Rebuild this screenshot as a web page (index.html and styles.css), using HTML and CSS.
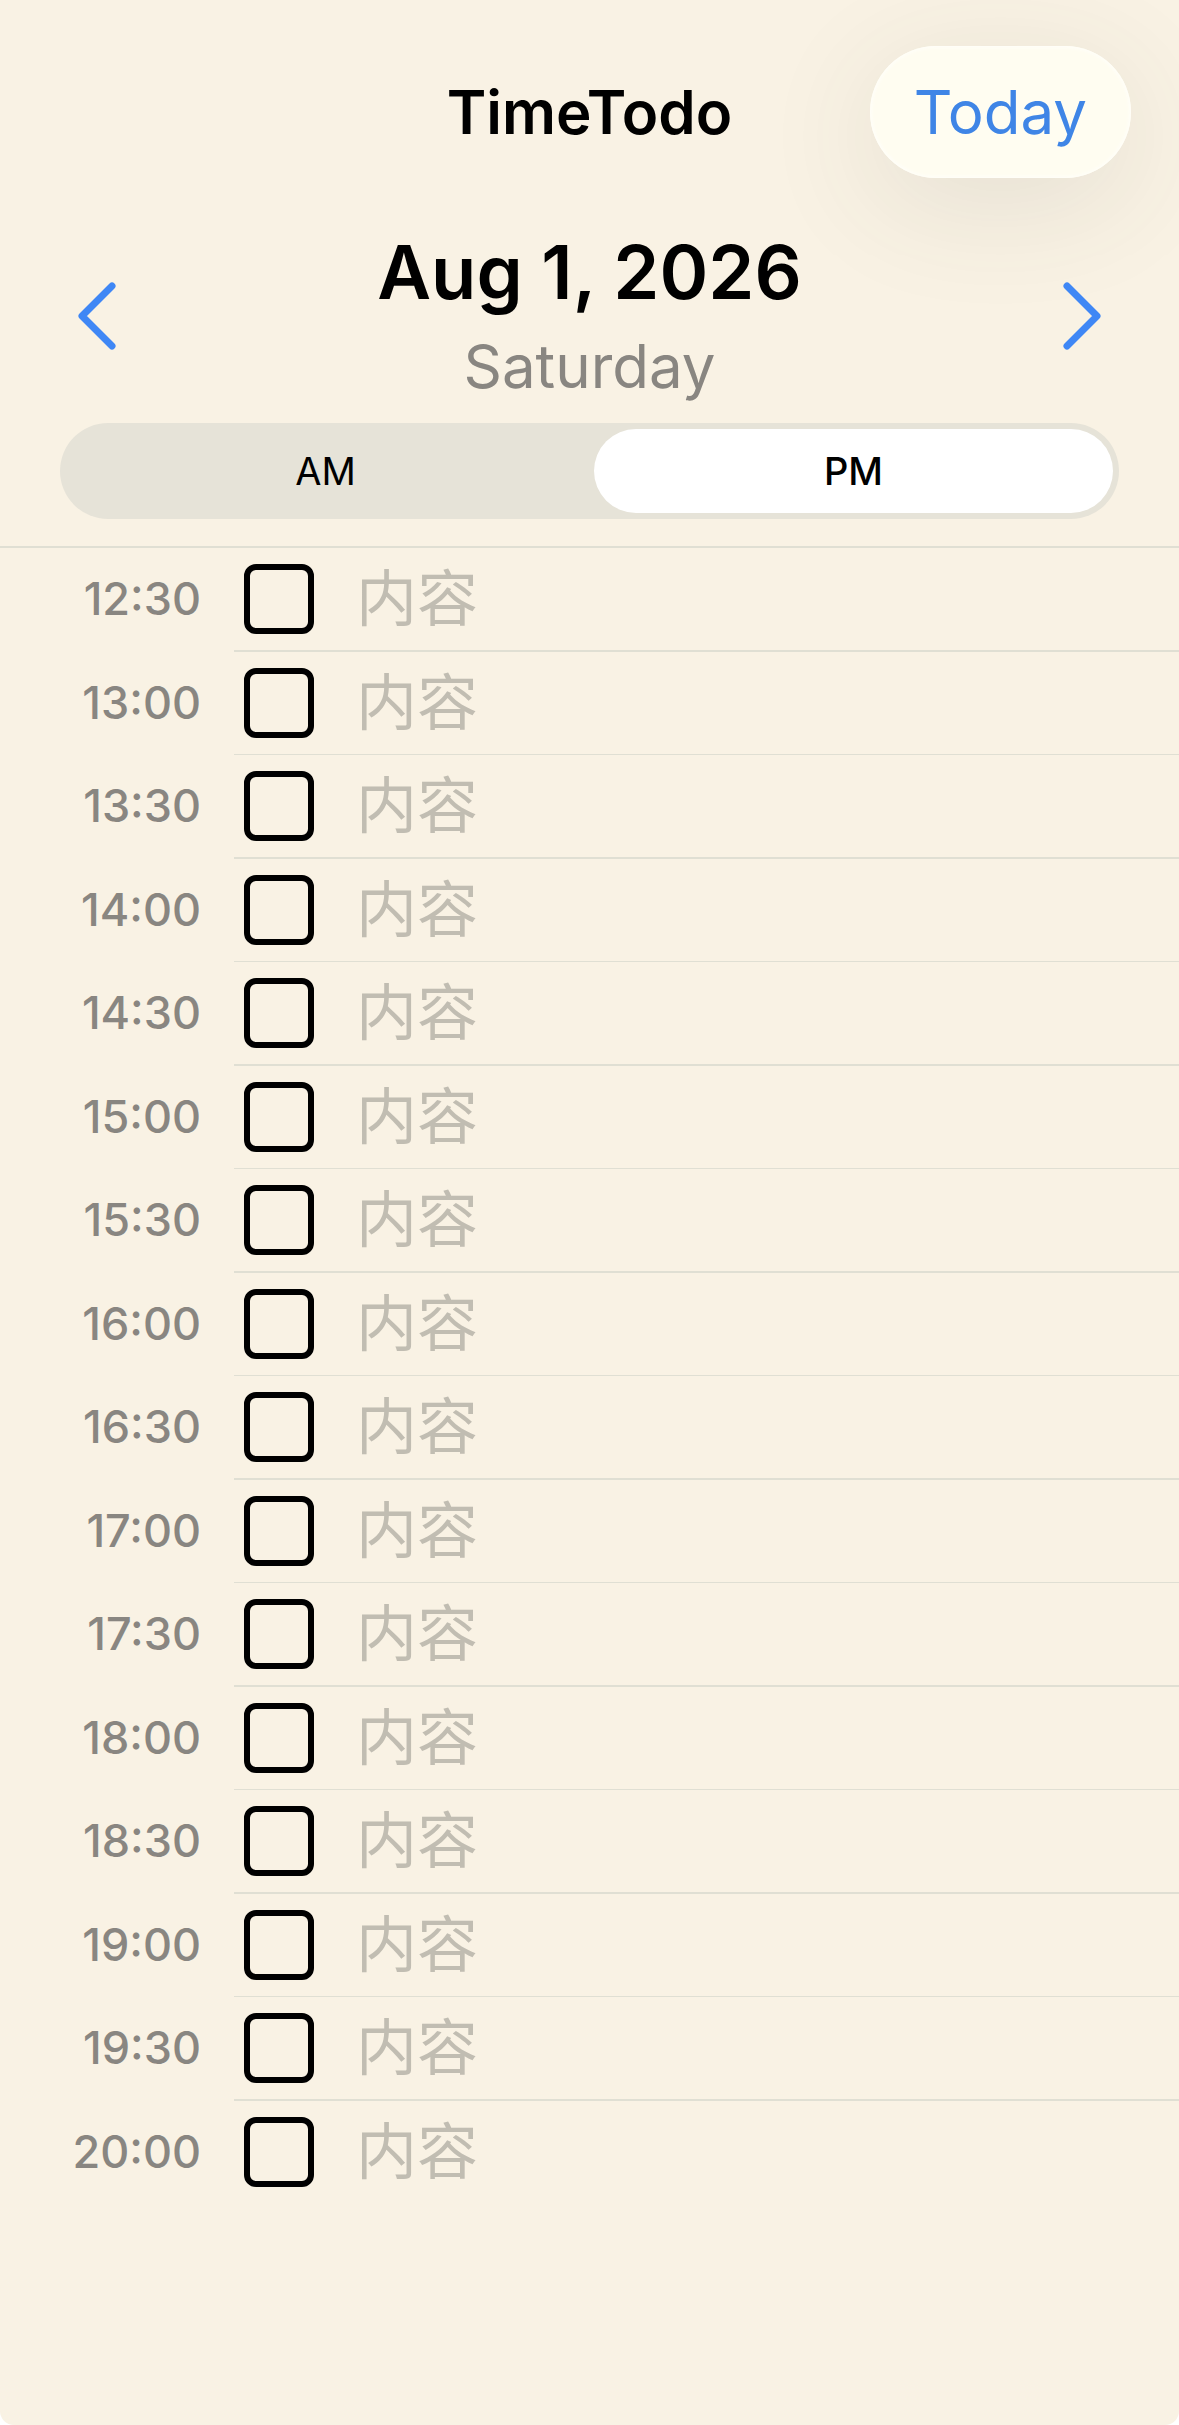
FILE: index.html
```
<!DOCTYPE html>
<html lang="en">
<head>
    <meta charset="UTF-8">
    <meta name="viewport" content="width=device-width, initial-scale=1.0">
    <title>TimeTodo</title>
    <link rel="stylesheet" href="styles.css">
</head>
<body>
    <div class="app">
        <header class="navbar">
            <h1>TimeTodo</h1>
            <button type="button" class="today">Today</button>
        </header>

        <div class="day-picker">
            <button type="button" class="arrow" aria-label="Previous day">
                <svg width="38" height="68" viewBox="0 0 38 68"><path d="M34 4 L4 34 L34 64"/></svg>
            </button>
            <div class="day">
                <h2>Aug 1, 2026</h2>
                <p>Saturday</p>
            </div>
            <button type="button" class="arrow" aria-label="Next day">
                <svg width="38" height="68" viewBox="0 0 38 68"><path d="M4 4 L34 34 L4 64"/></svg>
            </button>
        </div>

        <div class="segments">
            <input type="radio" name="half" id="am">
            <label for="am">AM</label>
            <input type="radio" name="half" id="pm" checked>
            <label for="pm">PM</label>
        </div>

        <ul class="slots">
            <li><label for="t1230">12:30</label><div class="entry"><input type="checkbox" id="t1230"><input type="text" placeholder="内容" aria-label="12:30 内容"></div></li>
            <li><label for="t1300">13:00</label><div class="entry"><input type="checkbox" id="t1300"><input type="text" placeholder="内容" aria-label="13:00 内容"></div></li>
            <li><label for="t1330">13:30</label><div class="entry"><input type="checkbox" id="t1330"><input type="text" placeholder="内容" aria-label="13:30 内容"></div></li>
            <li><label for="t1400">14:00</label><div class="entry"><input type="checkbox" id="t1400"><input type="text" placeholder="内容" aria-label="14:00 内容"></div></li>
            <li><label for="t1430">14:30</label><div class="entry"><input type="checkbox" id="t1430"><input type="text" placeholder="内容" aria-label="14:30 内容"></div></li>
            <li><label for="t1500">15:00</label><div class="entry"><input type="checkbox" id="t1500"><input type="text" placeholder="内容" aria-label="15:00 内容"></div></li>
            <li><label for="t1530">15:30</label><div class="entry"><input type="checkbox" id="t1530"><input type="text" placeholder="内容" aria-label="15:30 内容"></div></li>
            <li><label for="t1600">16:00</label><div class="entry"><input type="checkbox" id="t1600"><input type="text" placeholder="内容" aria-label="16:00 内容"></div></li>
            <li><label for="t1630">16:30</label><div class="entry"><input type="checkbox" id="t1630"><input type="text" placeholder="内容" aria-label="16:30 内容"></div></li>
            <li><label for="t1700">17:00</label><div class="entry"><input type="checkbox" id="t1700"><input type="text" placeholder="内容" aria-label="17:00 内容"></div></li>
            <li><label for="t1730">17:30</label><div class="entry"><input type="checkbox" id="t1730"><input type="text" placeholder="内容" aria-label="17:30 内容"></div></li>
            <li><label for="t1800">18:00</label><div class="entry"><input type="checkbox" id="t1800"><input type="text" placeholder="内容" aria-label="18:00 内容"></div></li>
            <li><label for="t1830">18:30</label><div class="entry"><input type="checkbox" id="t1830"><input type="text" placeholder="内容" aria-label="18:30 内容"></div></li>
            <li><label for="t1900">19:00</label><div class="entry"><input type="checkbox" id="t1900"><input type="text" placeholder="内容" aria-label="19:00 内容"></div></li>
            <li><label for="t1930">19:30</label><div class="entry"><input type="checkbox" id="t1930"><input type="text" placeholder="内容" aria-label="19:30 内容"></div></li>
            <li><label for="t2000">20:00</label><div class="entry"><input type="checkbox" id="t2000"><input type="text" placeholder="内容" aria-label="20:00 内容"></div></li>
        </ul>
    </div>
</body>
</html>
```

FILE: styles.css
```
* {
    box-sizing: border-box;
}
body {
    margin: 0;
    background: #fff;
    color: #000;
    font-family: Inter, "Noto Sans CJK SC", sans-serif;
}
h1, h2, p, ul {
    margin: 0;
    padding: 0;
}
button, input {
    font-family: inherit;
}
button {
    border: none;
    cursor: pointer;
}
.app {
    min-height: 100vh;
    background: #f9f2e4;
    border-radius: 0 0 14px 14px;
    overflow: hidden;
}
.navbar {
    display: grid;
    grid-template-columns: 1fr auto 1fr;
    align-items: center;
    padding: 46px 48px 0;
}
.navbar h1 {
    grid-column: 2;
    font-size: 60px;
    font-weight: 600;
    line-height: 72px;
}
.today {
    justify-self: end;
    height: 132px;
    padding: 0 44px;
    border-radius: 66px;
    background: #fffdf1;
    color: #3f85e6;
    font-size: 60px;
    box-shadow: inset 0 0 3px 2px #fffef8, 0 24px 120px rgba(60, 70, 60, 0.11);
}
.day-picker {
    display: flex;
    align-items: flex-start;
    justify-content: space-between;
    padding: 48px 78px 9px;
}
.arrow {
    display: flex;
    align-items: center;
    height: 180px;
    padding: 0;
    background: none;
}
.arrow path {
    fill: none;
    stroke: #3f87f5;
    stroke-width: 7;
    stroke-linecap: round;
    stroke-linejoin: round;
}
.day {
    text-align: center;
}
.day h2 {
    font-size: 74px;
    font-weight: 600;
    line-height: 92px;
}
.day p {
    color: #898681;
    font-size: 60px;
    line-height: 96px;
}
.segments {
    display: grid;
    grid-template-columns: 1fr 1fr;
    gap: 9px;
    height: 96px;
    margin: 0 60px 27px;
    padding: 6px;
    border-radius: 48px;
    background: #e6e3d8;
}
.segments input {
    position: absolute;
    opacity: 0;
}
.segments label {
    border-radius: 42px;
    font-size: 38px;
    line-height: 84px;
    text-align: center;
    cursor: pointer;
}
.segments input:checked + label {
    background: #fff;
    font-weight: 500;
}
.slots {
    border-top: 2px solid #e0dfd3;
    list-style: none;
}
.slots li {
    display: flex;
    align-items: stretch;
}
.slots label {
    flex: none;
    width: 234px;
    padding-right: 33px;
    color: #898681;
    font-size: 45px;
    font-weight: 500;
    line-height: 102px;
    text-align: right;
}
.entry {
    display: flex;
    flex: 1;
    align-items: center;
    gap: 42px;
    min-width: 0;
    padding-left: 10px;
    border-bottom: 2px solid #e0dfd3;
}
.slots li:nth-child(even) .entry {
    border-bottom-width: 1px;
}
.slots li:last-child .entry {
    border-bottom: none;
}
.entry input[type="checkbox"] {
    appearance: none;
    flex: none;
    width: 70px;
    height: 70px;
    margin: 0;
    border: 6px solid #000;
    border-radius: 12px;
}
.entry input[type="checkbox"]:checked {
    background: #000;
}
.entry input[type="text"] {
    flex: 1;
    min-width: 0;
    height: 102px;
    padding: 0;
    border: none;
    outline: none;
    background: none;
    font-size: 61px;
}
.entry input::placeholder {
    color: #c1bdb2;
    opacity: 1;
}
```
